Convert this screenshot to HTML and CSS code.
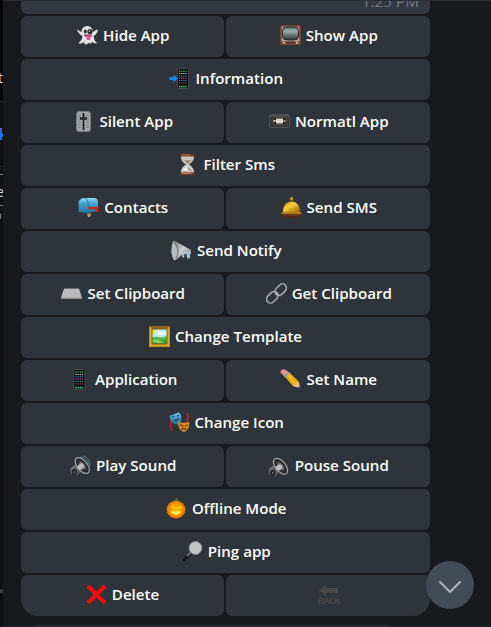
FILE: index.html
```html
<!DOCTYPE html>
<html lang="en">
<head>
<meta charset="utf-8">
<title>Bot keyboard</title>
<link rel="stylesheet" href="styles.css">
</head>
<body>
<svg width="0" height="0" class="defs" aria-hidden="true">
<defs>
<linearGradient id="screen" x2="0" y2="1"><stop stop-color="#566568"/><stop offset=".3" stop-color="#9eb0ae"/><stop offset="1" stop-color="#273135"/></linearGradient>
<linearGradient id="blue" x2="0" y2="1"><stop stop-color="#8ee0fa"/><stop offset=".35" stop-color="#46a5d0"/><stop offset="1" stop-color="#236f9d"/></linearGradient>
<linearGradient id="gold" x2="1" y2="1"><stop stop-color="#ad7705"/><stop offset=".4" stop-color="#f6d13b"/><stop offset="1" stop-color="#9a6006"/></linearGradient>
<linearGradient id="metal" x2="1" y2="1"><stop stop-color="#777"/><stop offset=".5" stop-color="#ccc"/><stop offset="1" stop-color="#777"/></linearGradient>
<radialGradient id="pumpkin"><stop stop-color="#ffc400"/><stop offset=".65" stop-color="#fb9a05"/><stop offset="1" stop-color="#dd6800"/></radialGradient>
<radialGradient id="cone"><stop stop-color="#ddd"/><stop offset=".25" stop-color="#999"/><stop offset=".55" stop-color="#333"/><stop offset="1" stop-color="#17191b"/></radialGradient>
<g id="phone"><rect x=".5" y=".5" width="11" height="20" rx="1" fill="#08090b" stroke="#484b4e"/>
<g stroke-width="1.2" stroke-dasharray="1.3 .8"><path d="M2 3.2h8" stroke="#43c46a"/><path d="M2 5.5h8" stroke="#c9cfd9"/><path d="M2 7.8h8" stroke="#3780b1"/><path d="M2 10.2h8" stroke="#b74ea4"/><path d="M2 12.5h8" stroke="#3b9db6"/><path d="M2 14.8h8" stroke="#725947"/><path d="M2 18.7h8" stroke="#59d481" stroke-width="1.8"/></g></g>
<g id="speaker"><path d="M0 14l5-4 6 6-4 4-6-1z" fill="#5e6163"/><circle cx="4.500" cy="17" r="2.700" fill="#222"/><circle cx="4.500" cy="17" r="1" fill="#777"/><path d="M1 14l4.500-4" stroke="#999" fill="none"/><ellipse cx="12.300" cy="10.500" rx="5" ry="9.300" transform="rotate(-39 12.300 10.500)" fill="url(#cone)" stroke="#a5a6a8" stroke-width="1.300"/><circle cx="10.300" cy="12" r="2.700" fill="#b9bcc0"/></g>
</defs>
</svg>
<div class="screen">
<aside class="edge">
<svg width="3" height="627" viewBox="0 0 3 627"><path fill="#000" d="M0 0h3v101H0z"/><path fill="#292d33" d="M0 101h3v1H0z"/><path fill="#1e70ea" d="M0 128h2v6h1v3H2v3H0z"/><path fill="#222830" d="M0 166h3v1H0zM0 213h3v1H0z"/><path fill="#777b82" d="M0 174h3v1H0zM0 205h3v1H0zM0 214h1v5H0z"/><path fill="#383c43" d="M0 589h3v4H0z"/></svg>
<span class="peek peek-t">t</span><span class="peek peek-e">e</span>
</aside>
<main class="chat">
<div class="message"><time>1:25 PM</time></div>
<div class="keyboard">
<button class="key"><svg class="icon" viewBox="0 0 21 21"><path d="M0 5c2-.5 3 2 4.500 2 0-4 3-6 6-6s5.500 3 5.500 6c2 0 2-3 5-2-1 3-2 5-4.500 6l1 4c1 2 2 3 3 3-2 1-4 0-5-1-2 3-3 1-4 1-2 2-4 2-5-1-2 2-4 2-5 1 3-2 4-5 4-7-2.500-1-4-3-5.500-6z" fill="#e4e3e5"/><path d="M5 17c3 2 2-2 4 1m4-1c1 2 2-1 3 0" stroke="#aaa" fill="none"/><ellipse cx="8.300" cy="6.500" rx="1.600" ry="2" fill="#333"/><circle cx="13" cy="6.500" r="2.600" fill="#27272a"/><circle cx="12.500" cy="6" r=".8" fill="#fff"/><path d="M7 10h8c0 1-.7 1.800-1.300 2L13 15h-3l-1-3c-1 0-2-1-2-2z" fill="#e74f94"/><path d="M7 10h8" stroke="#65354e"/></svg>Hide App</button>
<button class="key"><svg class="icon" viewBox="0 0 21 21"><rect x=".5" y=".5" width="20" height="19" rx="1" fill="#786156" stroke="#70412f"/><path d="M2 2h17v14H2z" fill="#c0ad9d"/><rect x="2.500" y="2" width="16" height="13" rx="4" fill="url(#screen)" stroke="#25282a"/><path d="M1 17h19v3H1z" fill="#7a4635"/><path d="M7 18h8" stroke="#3a2924"/><circle cx="4" cy="17.800" r="1" fill="#e0cdbd"/><circle cx="17" cy="17.800" r="1" fill="#e0cdbd"/></svg>Show App</button>
<button class="key wide"><svg class="icon" viewBox="0 0 21 21"><use href="#phone" x="8"/><path d="M.5 9h4V7L9 10.500 4.500 14v-2h-4z" fill="#128af5"/></svg>Information</button>
<button class="key"><svg class="icon" viewBox="0 0 21 21"><rect x="3.500" y=".5" width="14" height="20" rx="2.500" fill="#a2a5a7" stroke="#737779"/><path d="M5 4h3m5 0h3M5 6.500h3m5 0h3M5 9h3m5 0h3M5 11.500h3m5 0h3M5 14h3m5 0h3M5 16.500h3m5 0h3" stroke="#7d8183"/><path d="M10.500 2v17" stroke="#111" stroke-width="1.600"/><path d="M7 6h7v3H7z" fill="#333638"/></svg>Silent App</button>
<button class="key"><svg class="icon" viewBox="0 0 21 21"><rect x=".5" y="3.500" width="20" height="13" rx="1" fill="#363738" stroke="#505254"/><path d="M1 5h19" stroke="#606264"/><rect x="3" y="6.500" width="15" height="7" rx="3.500" fill="#17191a" stroke="#594c45"/><path d="M7 7.500h7v5H7z" fill="#ddd9c8"/><circle cx="5.500" cy="10" r="1.300" fill="#c9c7be"/><circle cx="15.500" cy="10" r="1.300" fill="#a49b92"/></svg>Normatl App</button>
<button class="key wide"><svg class="icon" viewBox="0 0 21 21"><path d="M4 2h13c0 5-2 6-5 8.500 3 2 5 4 5 8.500H4c0-5 2-6.500 5-8.500C6 8.500 4 7 4 2z" fill="#c9c7c8"/><path d="M6 5c3 2 6 2 9 0l-4 5zm0 13 4.500-5 5 5z" fill="#a08062"/><path d="M6 17c1-3 3-4 4-5l1 4 4 2z" fill="#f2eeec"/><path d="M3.500 0h14v2.500h-14zM3.500 18.500h14V21h-14z" fill="#763b20"/><path d="M5 1h8M5 19.500h9" stroke="#b37850"/></svg>Filter Sms</button>
<button class="key"><svg class="icon" viewBox="0 0 21 21"><path d="M9 15h4v2l-1 3h-2l-1-3z" fill="#c19968"/><path d="M9 15h4v2H9z" fill="#665240"/><path d="M.5 15V6c0-3 3-5 6-5H16c3 0 4 2 4 4v9l-10 2z" fill="url(#blue)"/><path d="M10 16V6c0-3-1-5-4-5" stroke="#267fab" fill="none"/><path d="M10 10h10.500v5h-3v-3H10z" fill="#d52016"/></svg>Contacts</button>
<button class="key"><svg class="icon" viewBox="0 0 21 21"><path d="M2 15C2 9 5 4.500 10.500 4.500S19 9 19 15z" fill="url(#gold)"/><path d="M10.500 2v3" stroke="#8c6116" stroke-width="2"/><circle cx="10.500" cy="1.500" r="1.500" fill="#d8a324"/><path d="M1.500 15h18l1.500 2H0z" fill="#b77a08"/><path d="M1 17h19v2l-2 2H3l-2-2z" fill="#4e241b"/><path d="M2 18h17" stroke="#7c4632"/></svg>Send SMS</button>
<button class="key wide"><svg class="icon" viewBox="0 0 21 21"><path d="M3 .5 20 10v4l-9 1-7 5.500C1 19 .5 13 .5 9c0-4 1-7 2.500-8.500z" fill="url(#metal)"/><path d="M12 12h7v6.500h-3V14l-3 .5v3h-2z" fill="#a9c0cf"/><path d="M13 14h3v3h-3z" fill="#465460"/><path d="M2 1c3 5 4 13 2 19-3-2-4-7-3-13z" fill="#bcbdbf"/><path d="M3 2c5 4 5 12 1.500 17" stroke="#77797b" stroke-width="1.300" fill="none"/></svg>Send Notify</button>
<button class="key"><svg class="icon" viewBox="0 0 21 21"><path d="M3 5.500h15l3 9v1.500H0v-1.500z" fill="#a3a5a7"/><path d="M3 7h15M2 9h17M1.500 11h18M1 13h19" stroke="#dedfe0" stroke-width="1.200" stroke-dasharray="1.400 .5"/><path d="M0 15.500h21" stroke="#929496"/></svg>Set Clipboard</button>
<button class="key"><svg class="icon" viewBox="0 0 21 21"><g fill="none" stroke="#484d51" stroke-width="2.600"><rect x="8.200" y="2.700" width="13" height="8" rx="4" transform="rotate(-45 14.700 6.700)"/><rect x="-.2" y="10.300" width="13" height="8" rx="4" transform="rotate(-45 6.300 14.300)"/></g><g fill="none" stroke="#b4b7bb" stroke-width="1.200"><rect x="8.200" y="2.700" width="13" height="8" rx="4" transform="rotate(-45 14.700 6.700)"/><rect x="-.2" y="10.300" width="13" height="8" rx="4" transform="rotate(-45 6.300 14.300)"/></g></svg>Get Clipboard</button>
<button class="key wide template"><svg class="icon" viewBox="0 0 21 21"><path d="M0 0h21v21H0z" fill="#c88b16"/><path d="M1 1h19v19H1z" fill="#e0aa24"/><path d="M0 0h21l-3 3H3z" fill="#8e651a"/><path d="M3 3h15v15H3z" fill="#bdebf3"/><path d="M3 4h3v4H3z" fill="#f0e55e"/><path d="M8 6c2-3 4 0 7 0l3-1v4H9z" fill="#eefcff"/><path d="M3 12c4-3 7 1 15-2v8H3z" fill="#61bd54"/><path d="M3 13c6-2 9 2 15 0v5H3z" fill="#3d9e38"/><path d="M3 14c5-2 9 1 12 2l-5 1-7-1z" fill="#83d268"/><path d="M3 3h15v15H3z" fill="none" stroke="#79611e"/></svg>Change Template</button>
<button class="key"><svg class="icon" viewBox="0 0 21 21"><use href="#phone" x="4.500"/></svg>Application</button>
<button class="key"><svg class="icon" viewBox="0 0 21 21"><path d="M4.500 7 9 3l10 10 1 6-7-2z" fill="#f8bd18"/><path d="m6 7 9 9M9 4l9 10" stroke="#cf8a05" stroke-width=".8"/><path d="M3 6 7 2l3 2-5 5z" fill="#969ea8"/><path d="M.5 4C0 1 3-.5 5 .5l3 2-4 4z" fill="#e68b91"/><path d="m13 17 5-4 2 6z" fill="#e6c48e"/><path d="m18 18 1-1 1 3z" fill="#292423"/></svg>Set Name</button>
<button class="key wide"><svg class="icon" viewBox="0 0 21 21"><path d="M1 7c4 2-2 6 2 12M18 1c3 4-1 5 1 9" stroke="#b42925" stroke-width="1.700" fill="none"/><path d="M.5 4 10 .5c3 3 3 7 1 10.500-3 3-7 1-9-2z" fill="url(#blue)"/><path d="m3 5 2-1m3 0 2-1M5 8c2 1 4 0 5-2" stroke="#173f5b" stroke-width="1.300" fill="none"/><path d="M9 10c3 1 7 1 11 0 1 4-1 9-5 10-4-1-6-5-6-10z" fill="#d98528"/><path d="m11 13 3 1m2 0 3-1m-6 5c1-3 3-2 4 0" stroke="#5b2b13" stroke-width="1.200" fill="none"/></svg>Change Icon</button>
<button class="key"><svg class="icon" viewBox="0 0 21 21"><use href="#speaker"/><path d="M10 2c6-1 10 6 9 11M13 1c4 0 8 6 7 10" stroke="#537581" fill="none"/></svg>Play Sound</button>
<button class="key"><svg class="icon" viewBox="0 0 21 21"><use href="#speaker" x="-.7" y=".8"/></svg>Pouse Sound</button>
<button class="key wide"><svg class="icon" viewBox="0 0 21 21"><path d="m9 4 .5-4h2l.5 5z" fill="#4d7c20"/><ellipse cx="10" cy="11.500" rx="9.500" ry="9" fill="url(#pumpkin)"/><path d="M7 4c-4 5-4 11 0 15m6-15c4 5 4 11 0 15" stroke="#e99000" stroke-width=".7" fill="none"/><path d="m5.500 10 1.500-2 1 2zm7 0 1-2 1.500 2zM4.500 13l1.500.500 2-.500 2 1 2-1 2 .500 1.500-.500c-1 5-10 5-11 0z" fill="#fff04d"/></svg>Offline Mode</button>
<button class="key wide"><svg class="icon" viewBox="0 0 21 21"><path d="m1 20 8-8" stroke="#15181a" stroke-width="3"/><path d="m5 15 4-4" stroke="#888" stroke-width="1.500"/><circle cx="13.500" cy="7" r="6.400" fill="#c2c4c6" stroke="#8d9194" stroke-width="1"/></svg>Ping app</button>
<button class="key last-left"><svg class="icon" viewBox="0 0 21 21"><path d="m2 2 17 17M19 2 2 19" stroke="#f20c0c" stroke-width="4"/></svg>Delete</button>
<button class="key last-right"><span class="back"><svg width="19" height="11" viewBox="0 0 19 11"><path d="m0 5.500 7-5.500v3h12v5H7v3z"/></svg><span>BACK</span></span></button>
</div>
<div class="next-message"></div>
</main>
<button class="scroll-down" aria-label="Scroll down"><svg width="24" height="14" viewBox="0 0 24 14"><path d="m2 2 10 10L22 2"/></svg></button>
</div>
</body>
</html>
```
FILE: styles.css
```css
* { box-sizing: border-box; }
body { margin: 0; background: #18191c; }
.defs { position: absolute; }
.screen { position: relative; display: flex; width: 491px; height: 627px; overflow: hidden; font-family: "Open Sans", "Noto Sans", sans-serif; }
.screen::before { content: ""; position: absolute; inset: 0 0 auto 3px; height: 1px; background: #292d32; z-index: 1; }
.screen::after { content: ""; position: absolute; inset: auto 0 0 2px; height: 1px; background: #292c31; }
.edge { position: relative; flex: 0 0 3px; height: 627px; overflow: hidden; background: #0d0e17; }
.edge svg { display: block; }
.peek { position: absolute; right: 0; color: #ddd; font-size: 14px; line-height: 18px; }
.peek-t { top: 69px; }
.peek-e { top: 183px; right: -1px; }
.chat { flex: none; width: 409px; margin-left: 18px; }
.message { height: 14px; overflow: hidden; border-radius: 0 0 6px 6px; background: #33373e; text-align: right; padding-right: 11px; }
.message time { display: block; margin-top: -9px; color: #767b82; font-size: 15.3px; line-height: 20px; }
.keyboard { display: grid; grid-template-columns: 203px 204px; grid-auto-rows: 41px; gap: 2px; margin-top: 2px; }
.key { display: flex; align-items: center; justify-content: center; gap: 5px; padding: 0 0 3px 1.5px; border: 0; border-radius: 6px; background: #2f343a; color: #fff; font: 600 15.1px/20px "Open Sans", "Noto Sans", sans-serif; font-kerning: none; white-space: nowrap; }
.wide { grid-column: 1 / -1; }
.template { padding-left: 0; }
.icon { flex: none; width: 21px; height: 21px; margin-top: 1px; }
.last-left { border-bottom-left-radius: 17px; padding-left: 0; }
.last-right { border-bottom-right-radius: 17px; }
.back { display: flex; flex-direction: column; align-items: center; margin-top: 3px; color: #484848; font: 700 9px/10px "Liberation Sans", sans-serif; letter-spacing: -1px; }
.back svg { fill: #484848; }
.next-message { height: 2px; width: 357px; margin: 9px 0 0 12px; border-radius: 6px 6px 0 0; background: #292d32; }
.scroll-down { position: absolute; left: 426px; top: 561px; width: 48px; height: 48px; padding: 4px 0 0; border: 0; border-radius: 50%; background: #434c56; display: grid; place-items: center; }
.scroll-down path { fill: none; stroke: #adb3b9; stroke-width: 2; stroke-linecap: round; stroke-linejoin: round; }
```
